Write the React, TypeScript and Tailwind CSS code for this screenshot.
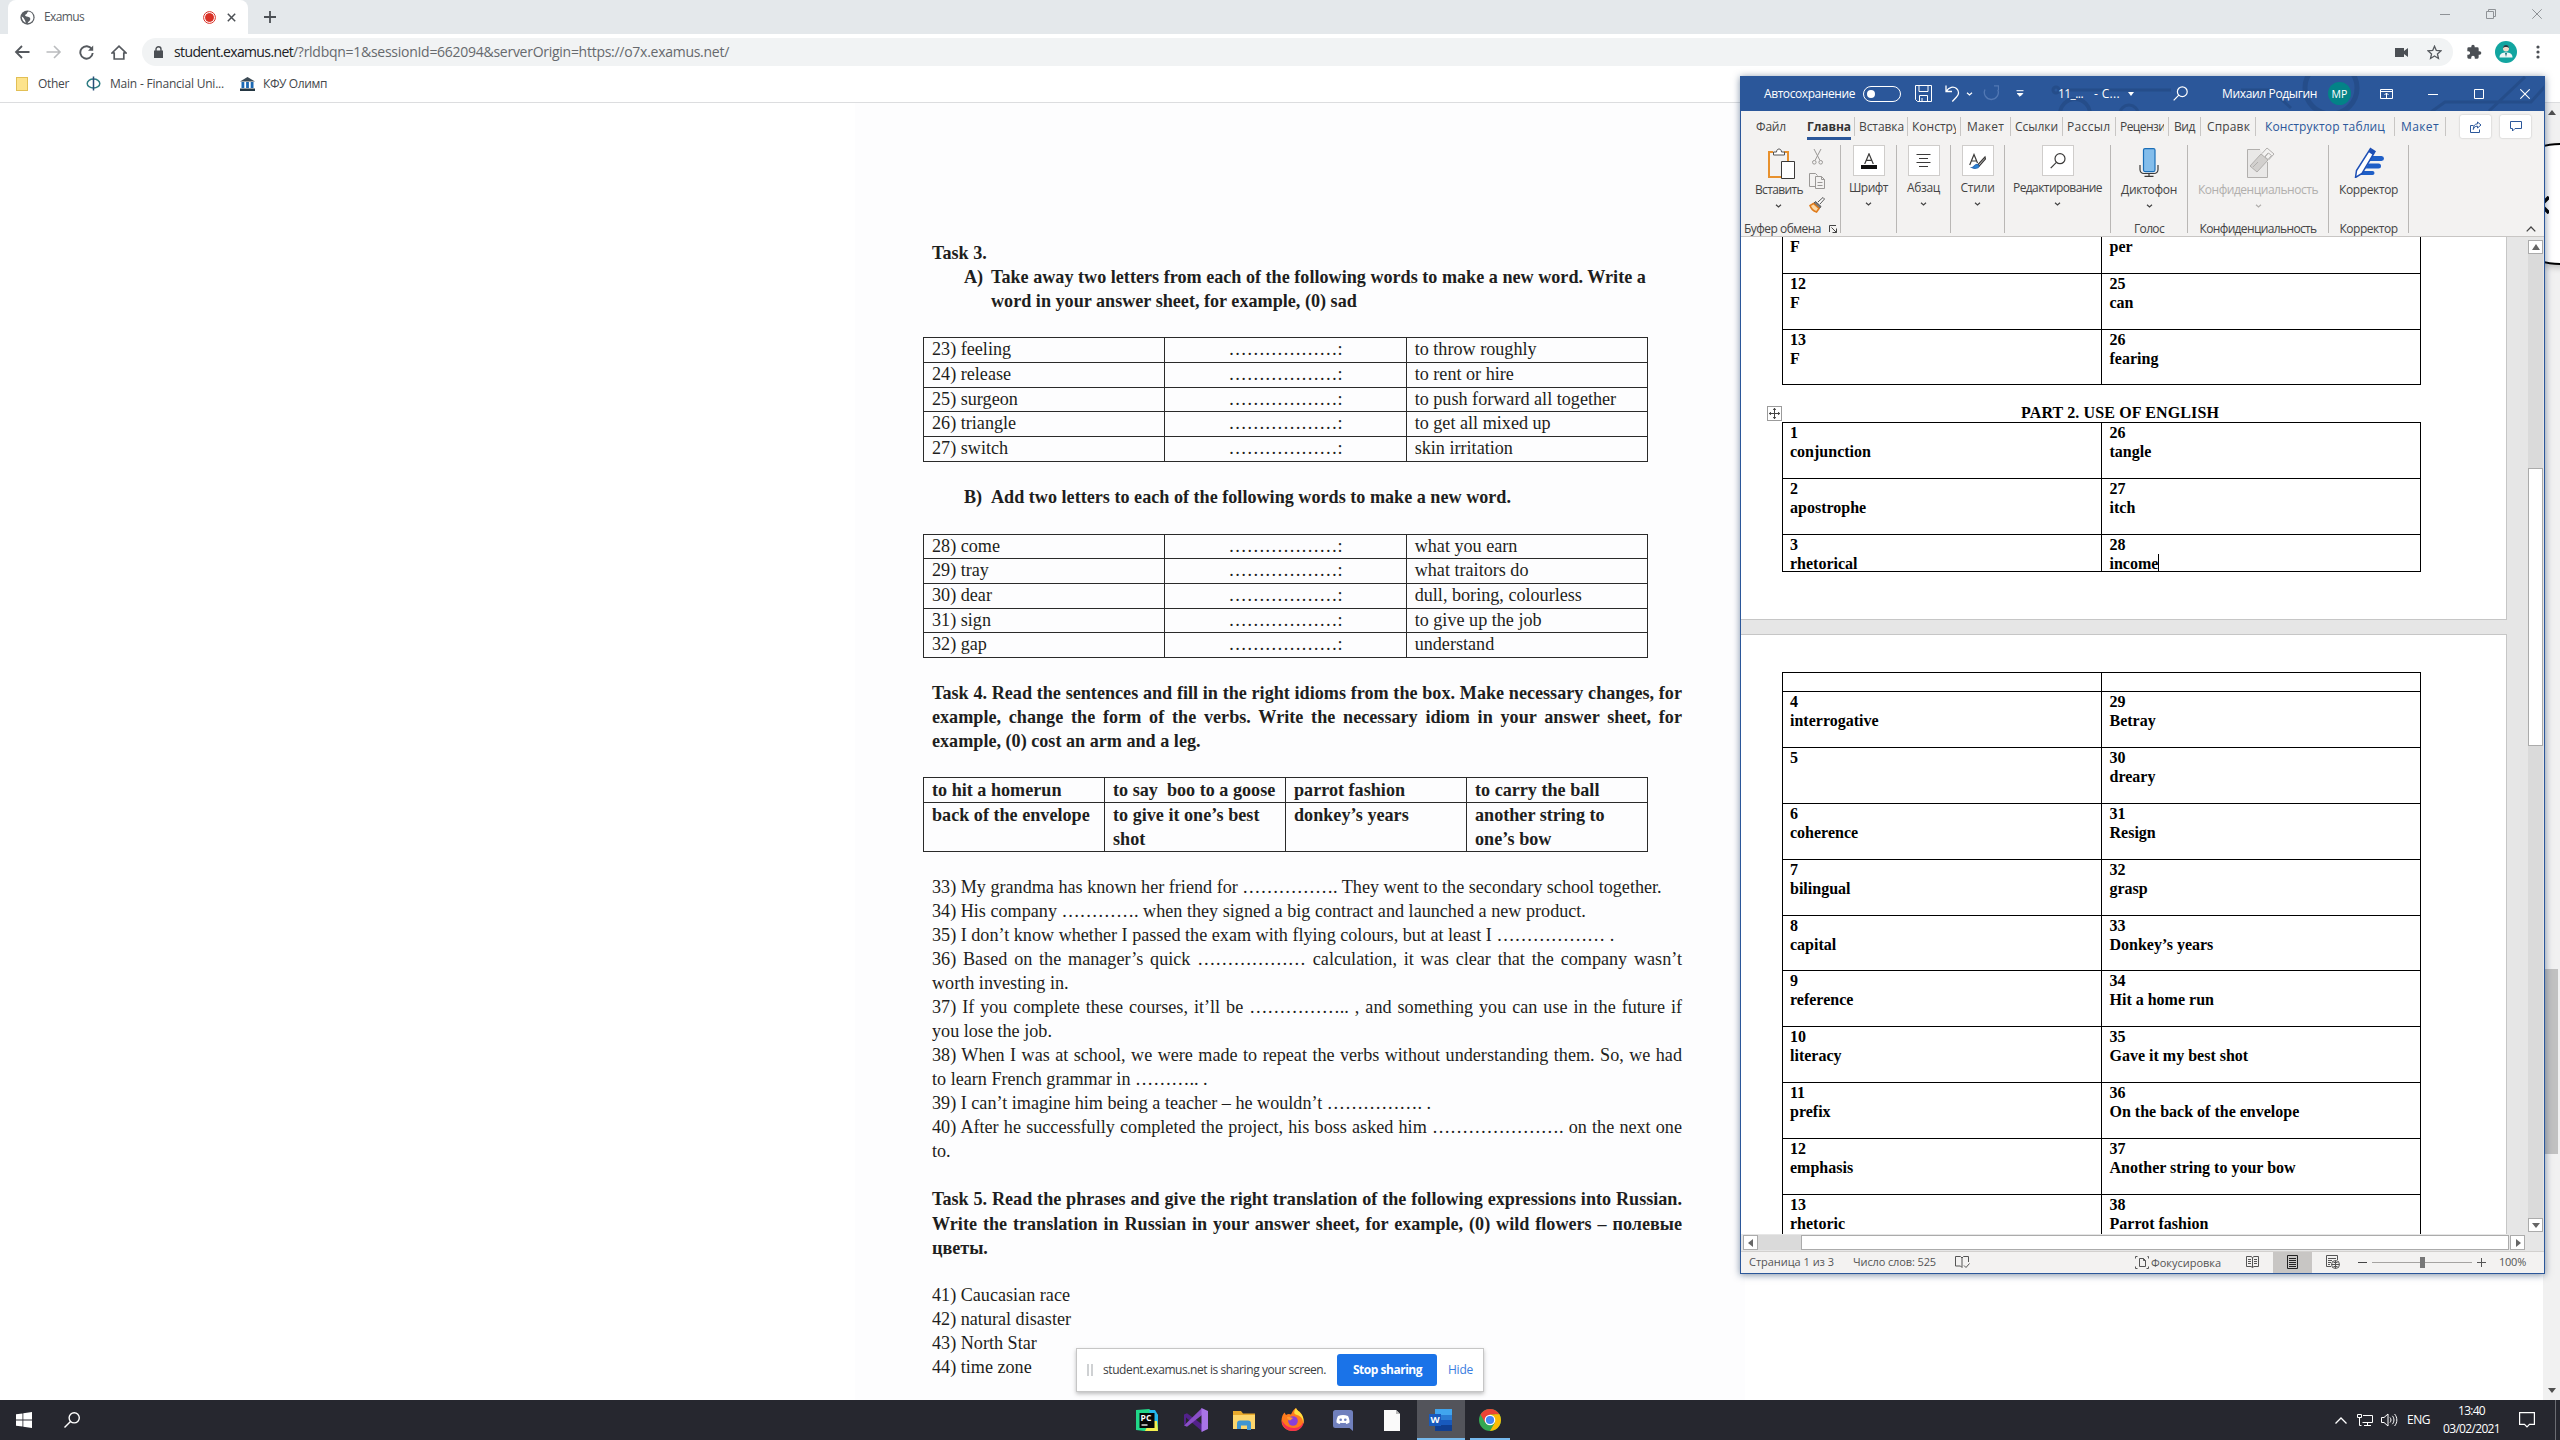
import { useLayoutEffect, useRef, type ReactNode } from 'react';

const UI = "font-['Open_Sans','Noto_Sans',sans-serif]";

/** One line of text whose tracking is adjusted to fill the width of its box. */
function Fit({ children, className = '' }: { children: string; className?: string }) {
  const box = useRef<HTMLSpanElement>(null);
  const text = useRef<HTMLSpanElement>(null);
  useLayoutEffect(() => {
    if (!box.current || !text.current) return;
    text.current.style.letterSpacing = '0px';
    const target = box.current.getBoundingClientRect().width;
    const natural = text.current.getBoundingClientRect().width;
    text.current.style.letterSpacing = `${(target - natural) / children.length}px`;
  }, [children]);
  return (
    <span ref={box} className={`block shrink-0 whitespace-pre ${className}`}>
      <span ref={text} className="inline-block whitespace-pre">{children}</span>
    </span>
  );
}

function Svg({ className, box, children, stroke = 'currentColor', sw = 1 }: { className: string; box: string; children: ReactNode; stroke?: string; sw?: number }) {
  return (
    <svg className={`block shrink-0 ${className}`} viewBox={box} fill="none" stroke={stroke} strokeWidth={sw}>
      {children}
    </svg>
  );
}

function Chevron({ className = '' }: { className?: string }) {
  return (
    <Svg className={`h-[4px] w-[7px] ${className}`} box="0 0 7 4" sw={1.2}>
      <path d="M1 .7 3.5 3 6 .7" />
    </Svg>
  );
}

/* ---------- Browser ---------- */

function TabStrip() {
  return (
    <div className="flex h-[34px] items-end bg-[#e4e8eb] pl-2">
      <div className="flex h-[34px] w-[240px] items-center rounded-t-lg bg-white pl-[12px]">
        <Svg className="h-[15px] w-[15px]" box="0 0 16 16" stroke="none">
          <circle cx="8" cy="8" r="7.6" fill="#5a5e63" />
          <path d="M9 1.5c-2 1-1 2.500-2.500 3S5 6.500 7 7s4 .5 4 2.500-2 2.500-3 4.500c3.500 0 6.300-2.700 6.300-6S12.500 1.800 9 1.500zM1.800 7c0 3.500 2.500 6 4.200 6.800C6 11 5 10.500 4.500 9.500S3 7.500 1.800 7z" fill="#fff" />
        </Svg>
        <Fit className="ml-[9px] w-[40px] text-[12px] leading-4 text-[#55595e]">Examus</Fit>
        <Svg className="ml-[119px] h-[13px] w-[13px]" box="0 0 13 13" stroke="#d93025">
          <circle cx="6.500" cy="6.500" r="5.900" />
          <circle cx="6.500" cy="6.500" r="4" fill="#d93025" />
        </Svg>
        <Svg className="ml-[11px] h-[9px] w-[9px]" box="0 0 9 9" stroke="#4b4f54" sw={1.5}>
          <path d="M.8.8l7.400 7.400M8.200.8.8 8.200" />
        </Svg>
      </div>
      <div className="flex h-[34px] flex-1 items-center pl-[16px]">
        <Svg className="h-[12px] w-[12px]" box="0 0 12 12" stroke="#4b4f54" sw={1.8}>
          <path d="M6 0v12M0 6h12" />
        </Svg>
        <div className="ml-auto flex items-center gap-[36px] pr-[18px] pb-[6px] text-[#8e9296]">
          <Svg className="h-[10px] w-[10px]" box="0 0 10 10"><path d="M0 5.500h10" /></Svg>
          <Svg className="h-[10px] w-[10px]" box="0 0 10 10"><path d="M.5 2.500h7v7h-7zM2.500 2.500v-2h7v7h-2" /></Svg>
          <Svg className="h-[10px] w-[10px]" box="0 0 10 10"><path d="M.3.3l9.400 9.400M9.700.3.3 9.700" /></Svg>
        </div>
      </div>
    </div>
  );
}

function Toolbar() {
  return (
    <div className="flex h-[34px] items-center pt-[2px] pl-[14px] text-[#55595e]">
      <Svg className="h-[14px] w-[16px]" box="0 0 16 14" sw={1.8}><path d="M15.500 7H1.500M8 1 2 7l6 6" /></Svg>
      <Svg className="ml-[16px] h-[14px] w-[16px] text-[#babcbe]" box="0 0 16 14" sw={1.6}><path d="M.5 7h14M8 1l6 6-6 6" /></Svg>
      <Svg className="ml-[17px] h-[15px] w-[15px]" box="0 0 15 15" sw={1.9}>
        <path d="M12.800 4.200A6.200 6.200 0 1 0 13.700 8" /><path d="M14.200.5v5.300H9z" fill="currentColor" stroke="none" />
      </Svg>
      <Svg className="ml-[17px] h-[15px] w-[16px]" box="0 0 16 15" sw={1.7}><path d="M1 8 8 1.200 15 8h-2.200v6H3.200V8z" /></Svg>
      <div className="ml-[15px] flex h-[28px] w-[2311px] items-center rounded-full bg-[#f1f3f4] pl-[12px]">
        <Svg className="h-[12px] w-[9px]" box="0 0 9 12" stroke="none">
          <path d="M0 4.500h9V12H0z" fill="#4b4f54" /><path d="M2 5V3.200a2.500 2.500 0 0 1 5 0V5" stroke="#4b4f54" strokeWidth="1.400" />
        </Svg>
        <Fit className="ml-[11px] w-[119px] text-[14px] leading-5 text-[#202124]">student.examus.net</Fit>
        <Fit className="w-[436px] text-[14px] leading-5 text-[#66696d]">/?rldbqn=1&sessionId=662094&serverOrigin=https://o7x.examus.net/</Fit>
        <Svg className="ml-auto h-[9px] w-[13px]" box="0 0 13 9" stroke="none"><path d="M0 0h9v3l4-3v9L9 6v3H0z" fill="#4b4f54" /></Svg>
        <Svg className="mr-[11px] ml-[19px] h-[15px] w-[15px]" box="0 0 24 24" sw={2.1}>
          <path d="m12 2 2.900 6.800 7.300.6-5.500 4.900 1.600 7.200L12 17.700l-6.300 3.800 1.600-7.200L1.800 9.400l7.300-.6z" />
        </Svg>
      </div>
      <Svg className="ml-[13px] h-[16px] w-[16px]" box="0 0 24 24" stroke="none">
        <path fill="#4b4f54" d="M20.500 11H19V7a2 2 0 0 0-2-2h-4V3.500a2.500 2.500 0 0 0-5 0V5H4a2 2 0 0 0-2 2v3.800h1.500a2.700 2.700 0 0 1 0 5.400H2V20a2 2 0 0 0 2 2h3.800v-1.500a2.700 2.700 0 0 1 5.400 0V22H17a2 2 0 0 0 2-2v-4h1.500a2.500 2.500 0 0 0 0-5z" />
      </Svg>
      <Svg className="ml-[13px] h-[22px] w-[22px]" box="0 0 22 22" stroke="none">
        <circle cx="11" cy="11" r="11" fill="#12a5a0" />
        <circle cx="11" cy="7.500" r="3" fill="#f3d9c8" /><path d="M8 7c0-4 6-4 6 0-1-1.500-5-1.500-6 0z" fill="#243a45" />
        <path d="M4.500 16.500c0-4 3-5 6.500-5s6.500 1 6.500 5z" fill="#eef6f6" /><path d="m10 12 1 4 1-4z" fill="#1b6f78" />
      </Svg>
      <Svg className="ml-[19px] h-[14px] w-[4px]" box="0 0 4 14" stroke="none">
        <g fill="#4b4f54"><circle cx="2" cy="2" r="1.600" /><circle cx="2" cy="7" r="1.600" /><circle cx="2" cy="12" r="1.600" /></g>
      </Svg>
    </div>
  );
}

function Bookmarks() {
  return (
    <div className="flex h-[35px] items-center border-b border-[#dcdddf] pb-[3px] pl-[16px] text-[12px] leading-4 text-[#44474b]">
      <div className="h-[14px] w-[12px] border border-[#e2bf55] bg-[#fde38c]" />
      <Fit className="ml-[10px] w-[31px]">Other</Fit>
      <Svg className="ml-[17px] h-[15px] w-[15px]" box="0 0 15 15" stroke="#2f7d84" sw={1.500}>
        <ellipse cx="7.500" cy="7.500" rx="6.300" ry="4.500" /><path d="M7.500.5v14" stroke="#2a4d77" />
      </Svg>
      <Fit className="ml-[9px] w-[114px]">Main - Financial Uni...</Fit>
      <Svg className="ml-[16px] h-[14px] w-[15px]" box="0 0 15 14" stroke="none">
        <path d="M7.500 0 15 4.500H0z" fill="#3c4a55" /><path d="M1.500 5h2.800v6H1.500zM6.100 5h2.800v6H6.100zM10.700 5h2.800v6h-2.800z" fill="#1c69b4" /><path d="M0 11.500h15V14H0z" fill="#243642" />
      </Svg>
      <Fit className="ml-[8px] w-[64px]">КФУ Олимп</Fit>
    </div>
  );
}

const DOTS = '………………:';
const removeLetters = [
  ['23) feeling', 'to throw roughly'],
  ['24) release', 'to rent or hire'],
  ['25) surgeon', 'to push forward all together'],
  ['26) triangle', 'to get all mixed up'],
  ['27) switch', 'skin irritation'],
];
const addLetters = [
  ['28) come', 'what you earn'],
  ['29) tray', 'what traitors do'],
  ['30) dear', 'dull, boring, colourless'],
  ['31) sign', 'to give up the job'],
  ['32) gap', 'understand'],
];
const sentences: [string, boolean][] = [
  ['33) My grandma has known her friend for ……………. They went to the secondary school together.', false],
  ['34) His company …………. when they signed a big contract and launched a new product.', false],
  ['35) I don’t know whether I passed the exam with flying colours, but at least I ……………… .', false],
  ['36) Based on the manager’s quick ……………… calculation, it was clear that the company wasn’t', true],
  ['worth investing in.', false],
  ['37) If you complete these courses, it’ll be …………….. , and something you can use in the future if', true],
  ['you lose the job.', false],
  ['38) When I was at school, we were made to repeat the verbs without understanding them. So, we had', true],
  ['to learn French grammar in ……….. .', false],
  ['39) I can’t imagine him being a teacher – he wouldn’t ……………. .', false],
  ['40) After he successfully completed the project, his boss asked him …………………. on the next one', true],
  ['to.', false],
];

function Line({ children, justify = false }: { children: ReactNode; justify?: boolean }) {
  return <p className={justify ? '[text-align-last:justify]' : 'whitespace-nowrap'}>{children}</p>;
}

function WordTable({ rows }: { rows: string[][] }) {
  return (
    <div className="-ml-[9px] w-[725px] border-t border-l border-[#2a2a2a]">
      {rows.map(([word, hint]) => (
        <div key={word} className="grid h-[24.700px] grid-cols-3 border-b border-[#2a2a2a] leading-[23px]">
          <div className="border-r border-[#2a2a2a] pl-[8px]">{word}</div>
          <div className="border-r border-[#2a2a2a] text-center">{DOTS}</div>
          <div className="border-r border-[#2a2a2a] pl-[8px]">{hint}</div>
        </div>
      ))}
    </div>
  );
}

function Exam() {
  const idiom = 'border-r border-[#2a2a2a] pl-[8px]';
  return (
    <article className="ml-[855px] h-full w-[890px] bg-[#fdfdfe] pt-[138px] pl-[77px] font-['Liberation_Serif','Times_New_Roman',serif] text-[18.150px] leading-[24.050px] text-[#1e1e20]">
      <div className="w-[750px]">
        <div className="font-bold">
          <Line>Task 3.</Line>
          <div className="flex pl-[32px]">
            <span className="w-[27px] shrink-0">A)</span>
            <div>
              <Line>Take away two letters from each of the following words to make a new word. Write a</Line>
              <Line>word in your answer sheet, for example, (0) sad</Line>
            </div>
          </div>
        </div>
        <div className="mt-[24px]"><WordTable rows={removeLetters} /></div>
        <div className="mt-[23.500px] flex pl-[32px] font-bold">
          <span className="w-[27px] shrink-0">B)</span>
          <Line>Add two letters to each of the following words to make a new word.</Line>
        </div>
        <div className="mt-[24.500px]"><WordTable rows={addLetters} /></div>
        <div className="mt-[23px] font-bold">
          <Line justify>Task 4. Read the sentences and fill in the right idioms from the box. Make necessary changes, for</Line>
          <Line justify>example, change the form of the verbs. Write the necessary idiom in your answer sheet, for</Line>
          <Line>example, (0) cost an arm and a leg.</Line>
        </div>
        <div className="mt-[24px] -ml-[9px] w-[725px] border-t border-l border-[#2a2a2a] font-bold leading-[24.100px] whitespace-pre">
          <div className="grid h-[24.700px] grid-cols-4 border-b border-[#2a2a2a]">
            <div className={idiom}>to hit a homerun</div>
            <div className={idiom}>to say  boo to a goose</div>
            <div className={idiom}>parrot fashion</div>
            <div className={idiom}>to carry the ball</div>
          </div>
          <div className="grid h-[49px] grid-cols-4 border-b border-[#2a2a2a]">
            <div className={idiom}>back of the envelope</div>
            <div className={idiom}>{'to give it one’s best\nshot'}</div>
            <div className={idiom}>donkey’s years</div>
            <div className={idiom}>{'another string to\none’s bow'}</div>
          </div>
        </div>
        <div className="mt-[23px]">
          {sentences.map(([text, justify]) => <Line key={text} justify={justify}>{text}</Line>)}
        </div>
        <div className="mt-[24px] font-bold">
          <Line justify>Task 5. Read the phrases and give the right translation of the following expressions into Russian.</Line>
          <Line justify>Write the translation in Russian in your answer sheet, for example, (0) wild flowers – полевые</Line>
          <Line>цветы.</Line>
        </div>
        <div className="mt-[23.500px]">
          <Line>41) Caucasian race</Line>
          <Line>42) natural disaster</Line>
          <Line>43) North Star</Line>
          <Line>44) time zone</Line>
        </div>
      </div>
    </article>
  );
}

function PageScrollbar() {
  return (
    <div className="flex w-[17px] flex-col items-center bg-[#f1f1f1]">
      <Svg className="mt-[7px] h-[5px] w-[8px]" box="0 0 8 5" stroke="none"><path d="M0 5 4 0l4 5z" fill="#505050" /></Svg>
      <div className="mt-[854px] h-[185px] w-[13px] bg-[#c1c1c1]" />
      <Svg className="mt-auto mb-[7px] h-[5px] w-[8px]" box="0 0 8 5" stroke="none"><path d="M0 0l4 5 4-5z" fill="#505050" /></Svg>
    </div>
  );
}

function SharingBar() {
  return (
    <div className={`absolute top-[1348px] left-[1076px] flex h-[44px] w-[408px] items-center border border-[#c6c6c6] bg-white pl-[10px] shadow-[0_2px_4px_rgba(0,0,0,0.25)] ${UI}`}>
      <div className="h-[12px] w-[6px] border-x-2 border-[#cfd1d3]" />
      <Fit className="ml-[10px] w-[223px] text-[12px] leading-4 text-[#3c4043]">student.examus.net is sharing your screen.</Fit>
      <div className="ml-[11px] flex h-[32px] w-[100px] items-center rounded-[3px] bg-[#1a73e8] pl-[16px] text-white">
        <Fit className="w-[69px] text-[12px] leading-4 font-bold">Stop sharing</Fit>
      </div>
      <Fit className="ml-[11px] w-[25px] text-[12px] leading-4 text-[#3a7de0]">Hide</Fit>
    </div>
  );
}

/** Round call widget docked at the right screen edge. */
function CallBubble() {
  return (
    <div className="absolute top-[143px] left-[2499px] h-[122px] w-[122px] rounded-full border-2 border-black bg-white shadow-[0_3px_6px_rgba(0,0,0,0.2)]">
      <Svg className="mt-[51px] ml-[38px] h-[18px] w-[10px]" box="0 0 10 18" stroke="#000" sw={3.500}><path d="M10 1 2 9l8 8" /></Svg>
    </div>
  );
}

/* ---------- Word ---------- */

function TitleBar() {
  return (
    <div className="relative flex h-[35px] shrink-0 items-center overflow-hidden bg-[#2b579a] pl-[23px] text-[12px] leading-4 text-white">
      <svg className="absolute inset-0 h-full w-full" viewBox="0 0 803 35" fill="none" stroke="#1f4377" strokeWidth="3" opacity="0.450">
        <circle cx="590" cy="12" r="26" strokeWidth="5" />
        <circle cx="334" cy="38" r="15" strokeWidth="4" /><circle cx="388" cy="38" r="9" />
        <path d="M320 14h110M500 14h30l20 18M690 36l14-10h86l18-20M748 35l36-34" />
        <circle cx="315" cy="14" r="3" />
      </svg>
      <Fit className="relative w-[91px]">Автосохранение</Fit>
      <div className="relative ml-[8px] flex h-[16px] w-[38px] items-center rounded-full border border-white pl-[3px]">
        <div className="h-[8px] w-[8px] rounded-full bg-white" />
      </div>
      <Svg className="relative ml-[14px] h-[17px] w-[17px]" box="0 0 17 17"><path d="M.5.5h16v16H2.500l-2-2zM4 .5v6h9v-6M4.500 16.500v-6h8v6M7 16.500V13" /></Svg>
      <Svg className="relative ml-[13px] h-[17px] w-[15px]" box="0 0 15 17" sw={1.300}><path d="M1 .5v6h6M1.200 6.300C4 2 8.500 1 11.500 3.500c3 2.800 2.500 6 0 8.500l-4.200 4.500" /></Svg>
      <Chevron className="relative ml-[6px]" />
      <Svg className="relative ml-[10px] h-[17px] w-[16px] text-[#5278b4]" box="0 0 16 17" sw={1.300}><path d="M11 .8h4.500V5M14.800 4.800A7 7 0 1 1 2 4.500" /></Svg>
      <Svg className="relative ml-[17px] h-[7px] w-[8px]" box="0 0 8 7"><path d="M.5.7h7M1.200 3.500h5.600L4 6.300z" fill="currentColor" /></Svg>
      <Fit className="relative ml-[34px] w-[25px]">11_...</Fit>
      <Fit className="relative ml-[11px] w-[26px]">- C...</Fit>
      <Svg className="relative ml-[8px] h-[4px] w-[6px]" box="0 0 6 4" stroke="none"><path d="M0 0h6L3 4z" fill="#fff" /></Svg>
      <Svg className="relative ml-[39px] h-[15px] w-[15px]" box="0 0 15 15" sw={1.200}><circle cx="9.300" cy="5.700" r="4.900" /><path d="M5.800 9.200.7 14.300" /></Svg>
      <Fit className="relative ml-[34px] w-[95px]">Михаил Родыгин</Fit>
      <div className="relative ml-[11px] flex h-[23px] w-[23px] items-center justify-center rounded-full bg-[#038387]">
        <Fit className="w-[16px] text-[10.500px]">МР</Fit>
      </div>
      <Svg className="relative ml-[29px] h-[10px] w-[13px]" box="0 0 13 10"><path d="M.5.5h12v9H.5zM.5 2.500h12M6.500 9V4M4.500 6l2-2 2 2" /></Svg>
      <Svg className="relative ml-[35px] h-[10px] w-[10px]" box="0 0 10 10"><path d="M0 5.500h10" /></Svg>
      <Svg className="relative ml-[36px] h-[10px] w-[10px]" box="0 0 10 10"><path d="M.5.5h9v9h-9z" /></Svg>
      <Svg className="relative ml-[36px] h-[10px] w-[10px]" box="0 0 10 10" sw={1.100}><path d="M.3.3l9.400 9.400M9.700.3.3 9.700" /></Svg>
    </div>
  );
}

function TabSep({ className }: { className: string }) {
  return <div className={`h-[19px] w-px shrink-0 bg-[#c8c6c4] ${className}`} />;
}

function RibbonTabs() {
  return (
    <div className="flex h-[31px] shrink-0 items-center pl-[15px] text-[12px] leading-4 text-[#444]">
      <Fit className="w-[30px]">Файл</Fit>
      <div className="relative ml-[21px] w-[44px]">
        <Fit className="w-[44px] font-bold text-[#333]">Главна</Fit>
        <div className="absolute top-[18px] left-0 h-[3px] w-[44px] bg-[#2b579a]" />
      </div>
      <TabSep className="ml-[3px]" />
      <Fit className="ml-[4px] w-[45px]">Вставка</Fit>
      <TabSep className="ml-[3px]" />
      <div className="ml-[4px] w-[44px] shrink-0 overflow-hidden"><Fit className="w-[47px]">Констру</Fit></div>
      <TabSep className="ml-[4px]" />
      <Fit className="ml-[6px] w-[37px]">Макет</Fit>
      <TabSep className="ml-[6px]" />
      <Fit className="ml-[4px] w-[43px]">Ссылки</Fit>
      <TabSep className="ml-[4px]" />
      <div className="ml-[4px] w-[44px] shrink-0 overflow-hidden"><Fit className="w-[50px]">Рассылк</Fit></div>
      <TabSep className="ml-[4px]" />
      <div className="ml-[4px] w-[44px] shrink-0 overflow-hidden"><Fit className="w-[52px]">Рецензир</Fit></div>
      <TabSep className="ml-[4px]" />
      <Fit className="ml-[5px] w-[21px]">Вид</Fit>
      <TabSep className="ml-[5px]" />
      <Fit className="ml-[6px] w-[43px]">Справк</Fit>
      <TabSep className="ml-[5px]" />
      <Fit className="ml-[9px] w-[120px] text-[#2b579a]">Конструктор таблиц</Fit>
      <TabSep className="ml-[9px]" />
      <Fit className="ml-[6px] w-[38px] text-[#2b579a]">Макет</Fit>
      <TabSep className="ml-[6px]" />
      <div className="ml-[14px] flex h-[23px] w-[31px] items-center justify-center rounded-[2px] bg-white text-[#2b579a] shadow-[0_0_2px_rgba(0,0,0,0.25)]">
        <Svg className="h-[12px] w-[12px]" box="0 0 12 12"><path d="M3.500 4.500h-3v7h9v-3M7.500 1l3.500 3-3.500 3V5.200C5 5 3.800 6.500 3.300 8.500 3.300 5 4.800 2.800 7.500 2.800z" /></Svg>
      </div>
      <div className="ml-[9px] flex h-[23px] w-[31px] items-center justify-center rounded-[2px] bg-white text-[#2b579a] shadow-[0_0_2px_rgba(0,0,0,0.25)]">
        <Svg className="h-[11px] w-[12px]" box="0 0 12 11"><path d="M.5.5h11v7H5L2.500 10V7.500h-2z" /></Svg>
      </div>
    </div>
  );
}

function Group({ className, children, label }: { className: string; children: ReactNode; label?: ReactNode }) {
  return (
    <div className={`mt-[3px] flex h-[88px] shrink-0 flex-col items-center border-r border-[#b9b7b5] ${className}`}>
      {children}
      <div className="mt-auto mb-[-4px] h-[16px]">{label}</div>
    </div>
  );
}

function BoxIcon({ children }: { children: ReactNode }) {
  return <div className="flex h-[31px] w-[32px] items-center justify-center border border-[#cfcdcb] bg-white text-[#3b3a39]">{children}</div>;
}

function Ribbon() {
  return (
    <div className="flex h-[95px] shrink-0 border-b border-[#c8c6c4] text-[12px] leading-4 text-[#444]">
      <Group
        className="w-[100px]"
        label={
          <div className="flex items-center">
            <Fit className="w-[77px]">Буфер обмена</Fit>
            <Svg className="ml-[8px] h-[8px] w-[8px]" box="0 0 8 8"><path d="M.5 7V.5H7M2.500 2.500l5 5M7.500 3.500v4h-4" /></Svg>
          </div>
        }
      >
        <div className="flex w-full pl-[14px]">
          <div className="flex w-[48px] flex-col items-center">
            <Svg className="mt-[3px] ml-[4px] h-[31px] w-[29px]" box="0 0 29 31">
              <path d="M6 4H2v25h13M17 4h4v9" stroke="#e8912d" strokeWidth="2" />
              <path d="M6.500 7V4h3c0-4 5-4 5 0h3v3z" fill="#fff" stroke="#555" />
              <path d="M14.500 13.500h13v17h-13z" fill="#fff" stroke="#3b3a39" />
            </Svg>
            <Fit className="mt-[3px] w-[48px]">Вставить</Fit>
            <Chevron className="mt-[6px] mr-[1px]" />
          </div>
          <div className="ml-[5px] flex w-[18px] flex-col items-center pt-[4px]">
            <Svg className="h-[16px] w-[11px] text-[#9a9896]" box="0 0 11 16"><path d="M2 0l6 11.500M9 0 3 11.500" /><circle cx="2.300" cy="13.300" r="1.800" /><circle cx="8.700" cy="13.300" r="1.800" /></Svg>
            <Svg className="mt-[8px] h-[16px] w-[16px] text-[#9a9896]" box="0 0 16 16"><path d="M6 13.500H.5V.5h6l2 2M6.500 3.500h6l3 3v9h-9zM12.500 3.500v3h3M8.500 9.500h5M8.500 12.500h5" /></Svg>
            <Svg className="mt-[8px] h-[16px] w-[16px]" box="0 0 16 16">
              <path d="m9 5 5-4.500 1.500 1.500L11 7" stroke="#555" fill="#fff" /><path d="m6.500 4.500 5.500 5-1.500 2L5 6z" fill="#777" stroke="#555" />
              <path d="M4.500 6.500 1 8.500c1 3 3.500 5.500 6.500 6.500l2.500-3.500z" fill="#fbd9a8" stroke="#e07c1c" strokeWidth="1.600" />
            </Svg>
          </div>
        </div>
      </Group>
      <Group className="w-[56px]">
        <BoxIcon>
          <div className="flex flex-col items-center">
            <Svg className="h-[11px] w-[10px]" box="0 0 10 11" sw={1.200}><path d="M.7 11 5 .8 9.300 11M2.200 7.300h5.600" /></Svg>
            <div className="mt-[1px] h-[4px] w-[16px] bg-[#111]" />
          </div>
        </BoxIcon>
        <Fit className="mt-[4px] w-[39px]">Шрифт</Fit>
        <Chevron className="mt-[6px]" />
      </Group>
      <Group className="w-[54px]">
        <BoxIcon><Svg className="h-[14px] w-[15px]" box="0 0 15 14"><path d="M.5.5h14M3 4.500h9M.5 8.500h14M3 12.500h9" /></Svg></BoxIcon>
        <Fit className="mt-[4px] w-[33px]">Абзац</Fit>
        <Chevron className="mt-[6px]" />
      </Group>
      <Group className="w-[54px]">
        <BoxIcon>
          <Svg className="h-[16px] w-[17px]" box="0 0 17 16" sw={1.200}>
            <path d="M.7 12 5 1.500l3.500 8.500M2.200 8h5" /><path d="M16 4 9 11.500l1.200 1.500L16.500 6z" fill="#fff" /><path d="M3 14.500c2.500 0 2.500-3.500 5.500-3l1.500 1.700c-1 2.500-5 2.500-7 1.300z" fill="#2b88d8" stroke="#2b6cb8" />
          </Svg>
        </BoxIcon>
        <Fit className="mt-[4px] w-[34px]">Стили</Fit>
        <Chevron className="mt-[6px]" />
      </Group>
      <Group className="w-[106px]">
        <BoxIcon><Svg className="h-[16px] w-[16px]" box="0 0 16 16" sw={1.200}><circle cx="10" cy="5.700" r="5" /><path d="M6.400 9.400.7 15.200" /></Svg></BoxIcon>
        <Fit className="mt-[4px] w-[89px]">Редактирование</Fit>
        <Chevron className="mt-[6px]" />
      </Group>
      <Group className="w-[77px]" label={<Fit className="w-[30px]">Голос</Fit>}>
        <Svg className="mt-[3px] h-[29px] w-[20px]" box="0 0 20 29" sw={1.200}>
          <rect x="4.500" y=".6" width="11.500" height="23" rx="1.500" fill="#83bdeb" stroke="#1b6fb8" />
          <path d="M1 17v4.500c0 2 1.500 4 4 4h10c2.500 0 4-2 4-4V17M10 25.500v3M5.500 28.400h9" stroke="#3b3a39" />
        </Svg>
        <Fit className="mt-[5px] w-[56px]">Диктофон</Fit>
        <Chevron className="mt-[6px]" />
      </Group>
      <Group className="w-[141px]" label={<Fit className="w-[117px]">Конфиденциальность</Fit>}>
        <Svg className="mt-[2px] ml-[5px] h-[31px] w-[28px] text-[#b1afad]" box="0 0 28 31">
          <path d="M13 2.500H.5v28h20V15" fill="#e9e8e7" /><path d="m3 19 11-12 7 6-11 12z" fill="#d2d0ce" /><path d="M15 6.500 20 1l7 6-5.500 6M18 9.500l3-3.500M6 20l5-5" /><path d="m18 10 3.500-4 3 2.500-3.500 4z" fill="#f3f2f1" />
        </Svg>
        <Fit className="mt-[4px] w-[120px] text-[#b1afad]">Конфиденциальность</Fit>
        <Chevron className="mt-[6px] text-[#b1afad]" />
      </Group>
      <Group className="w-[80px]" label={<Fit className="w-[58px]">Корректор</Fit>}>
        <Svg className="mt-[2px] h-[31px] w-[30px]" box="0 0 30 31" stroke="none">
          <path d="M18 9h9.500a2 2 0 0 1 0 5H15.500zM14.500 16.500h10a2 2 0 0 1 0 5H11.500zM10 24h8.500a2 2 0 0 1 0 4H4z" fill="#1f5fc7" />
          <path d="M16.500 1.500 21 4.500 8 26.500 1.500 30.500 2.500 23.500z" fill="#fff" stroke="#1d4fb5" strokeWidth="1.500" /><path d="M16.500 1.500 21 4.500l-2 3.400-4.500-3z" fill="#1d4fb5" />
        </Svg>
        <Fit className="mt-[4px] w-[59px]">Корректор</Fit>
      </Group>
      <Svg className="mt-auto mr-[8px] mb-[4px] ml-auto h-[6px] w-[10px]" box="0 0 10 6" sw={1.300}><path d="M.7 5.400 5 1l4.300 4.400" /></Svg>
    </div>
  );
}

type Row = [string, string, string, string];
const part1: Row[] = [['12', 'F', '25', 'can'], ['13', 'F', '26', 'fearing']];
const part2: Row[] = [['1', 'conjunction', '26', 'tangle'], ['2', 'apostrophe', '27', 'itch']];
const part2Next: Row[] = [
  ['4', 'interrogative', '29', 'Betray'],
  ['5', '', '30', 'dreary'],
  ['6', 'coherence', '31', 'Resign'],
  ['7', 'bilingual', '32', 'grasp'],
  ['8', 'capital', '33', 'Donkey’s years'],
  ['9', 'reference', '34', 'Hit a home run'],
  ['10', 'literacy', '35', 'Gave it my best shot'],
  ['11', 'prefix', '36', 'On the back of the envelope'],
  ['12', 'emphasis', '37', 'Another string to your bow'],
  ['13', 'rhetoric', '38', 'Parrot fashion'],
];

function AnswerRow({ row, className = 'h-[56px]', caret = false }: { row: Row; className?: string; caret?: boolean }) {
  return (
    <div className={`grid shrink-0 grid-cols-2 grid-rows-1 border-t border-black ${className}`}>
      <div className="border-x border-black pl-[7px]"><p>{row[0]}</p><p>{row[1]}</p></div>
      <div className="border-r border-black pl-[8px]">
        <p>{row[2]}</p>
        <p className="flex">{row[3]}{caret && <span className="h-[17px] w-px bg-black" />}</p>
      </div>
    </div>
  );
}

function WordPages() {
  return (
    <div className="flex h-[997px] w-[766px] flex-col overflow-hidden font-['Liberation_Serif','Times_New_Roman',serif] text-[16px] leading-[19.400px] font-bold text-black">
      <div className="h-[383px] shrink-0 border-r border-b border-[#c6c6c6] bg-white pl-[41px]">
        <div className="w-[639px]">
          <div className="grid h-[36px] grid-cols-2">
            <div className="border-x border-black pl-[7px]">F</div>
            <div className="border-r border-black pl-[8px]">per</div>
          </div>
          {part1.map((row, i) => <AnswerRow key={row[0]} row={row} className={i === 1 ? 'h-[55px]' : 'h-[56px]'} />)}
          <div className="border-t border-black" />
          <div className="relative mt-[18px] flex h-[19px] justify-center pl-[37px]">
            <div className="absolute top-[3px] -left-[15px] flex h-[15px] w-[15px] items-center justify-center border border-[#9b9b9b] bg-white">
              <Svg className="h-[11px] w-[11px]" box="0 0 11 11" stroke="#444"><path d="M5.500 0v11M0 5.500h11M4 1.800 5.500.5 7 1.800M4 9.200l1.500 1.300L7 9.200M1.800 4 .5 5.500 1.800 7M9.200 4l1.300 1.500L9.200 7" /></Svg>
            </div>
            <Fit className="w-[198px]">PART 2. USE OF ENGLISH</Fit>
          </div>
          {part2.map((row) => <AnswerRow key={row[0]} row={row} />)}
          <AnswerRow row={['3', 'rhetorical', '28', 'income']} className="h-[38px] border-b" caret />
        </div>
      </div>
      <div className="mt-[14px] flex-1 overflow-hidden border-t border-r border-[#c6c6c6] bg-white pt-[37px] pl-[41px]">
        <div className="w-[639px]">
          <AnswerRow row={['', '', '', '']} className="h-[19px]" />
          {part2Next.map((row) => <AnswerRow key={row[0]} row={row} className={row[0] === '8' ? 'h-[55px]' : 'h-[56px]'} />)}
        </div>
      </div>
    </div>
  );
}

function ScrollButton({ d, className }: { d: string; className: string }) {
  return (
    <div className={`flex shrink-0 items-center justify-center border border-[#ababab] bg-white ${className}`}>
      <Svg className="h-[8px] w-[8px]" box="0 0 8 8" stroke="none"><path d={d} fill="#666" /></Svg>
    </div>
  );
}

function StatusBar() {
  return (
    <div className="flex h-[22px] shrink-0 items-center border-t border-[#d2d0ce] bg-[#f3f2f1] pb-px pl-[8px] text-[11px] leading-4 text-[#555]">
      <Fit className="w-[85px]">Страница 1 из 3</Fit>
      <Fit className="ml-[19px] w-[83px]">Число слов: 525</Fit>
      <Svg className="ml-[19px] h-[12px] w-[15px]" box="0 0 15 12"><path d="M7 11.500 5.500 10H.5V.5h5L7 2l1.500-1.500h5V6M7 2v9.500M9 9.500l2 2 3.500-4" /></Svg>
      <Svg className="ml-[165px] h-[13px] w-[14px]" box="0 0 14 13"><path d="M2.500.5h-2v2M.5 10.500v2h2M11.500 12.500h2v-2M13.500 2.500v-2h-1M4.500 2.500h4l2 2v6h-6zM8.500 2.500v2h2" /></Svg>
      <Fit className="ml-[2px] w-[70px] pt-[1px]">Фокусировка</Fit>
      <Svg className="ml-[25px] h-[12px] w-[13px]" box="0 0 13 12"><path d="M6.500 11.500v-10L5 .5H.5v10H5l1.500 1 1.500-1h4.500V.5H8l-1.500 1M2 3.500h3M2 5.500h3M2 7.500h3M8 3.500h3M8 5.500h3M8 7.500h3" /></Svg>
      <div className="ml-[14px] flex h-[21px] w-[39px] items-center justify-center bg-[#c8c6c4] text-[#222]">
        <Svg className="h-[14px] w-[11px]" box="0 0 11 14"><path d="M.5.5h10v13H.5zM2 3.500h7M2 5.500h7M2 7.500h7M2 9.500h7M2 11.500h7" /></Svg>
      </div>
      <Svg className="ml-[14px] h-[14px] w-[14px]" box="0 0 14 14"><path d="M5 11.500H.5V.5h11V5M2 3.500h8M2 5.500h4M2 7.500h3M2 9.500h2" /><circle cx="9.500" cy="9.500" r="4" /><path d="M5.500 9.500h8M9.500 5.500v8M7.500 7.500h4M7.500 11.500h4" /></Svg>
      <div className="ml-[18px] h-px w-[9px] bg-[#444]" />
      <div className="ml-[5px] flex h-[11px] w-[100px] items-center">
        <div className="h-px w-[48px] bg-[#a5a3a1]" />
        <div className="h-[11px] w-[5px] bg-[#777]" />
        <div className="h-px flex-1 bg-[#a5a3a1]" />
      </div>
      <Svg className="ml-[5px] h-[9px] w-[9px]" box="0 0 9 9"><path d="M0 4.500h9M4.500 0v9" /></Svg>
      <Fit className="ml-[13px] w-[27px]">100%</Fit>
    </div>
  );
}

function WordWindow() {
  return (
    <div className={`absolute top-[76px] left-[1740px] flex h-[1198px] w-[805px] flex-col border border-t-0 border-[#2b579a] bg-[#f3f2f1] shadow-[0_1px_7px_rgba(20,50,90,0.550)] ${UI}`}>
      <TitleBar />
      <RibbonTabs />
      <Ribbon />
      <div className="flex h-[997px] shrink-0 bg-[#e6e6e6]">
        <WordPages />
        <div className="ml-auto mr-px flex w-[15px] flex-col bg-[#dadada]">
          <div className="h-[3px] bg-[#e6e6e6]" />
          <ScrollButton className="h-[14px]" d="M0 7 4 1l4 6z" />
          <div className="mt-[214px] h-[278px] border border-[#ababab] bg-white" />
          <ScrollButton className="mt-auto h-[14px]" d="M0 2l4 5 4-5z" />
          <div className="h-[2px] bg-[#e6e6e6]" />
        </div>
      </div>
      <div className="flex h-[17px] shrink-0 items-center bg-[#e6e6e6] pl-[2px]">
        <ScrollButton className="h-[15px] w-[15px]" d="M6 0 1 4l5 4z" />
        <div className="h-[15px] w-[43px] bg-[#dadada]" />
        <div className="h-[15px] w-[708px] border border-[#ababab] bg-white" />
        <ScrollButton className="ml-px h-[15px] w-[15px]" d="M2 0l5 4-5 4z" />
      </div>
      <StatusBar />
    </div>
  );
}

/* ---------- Taskbar ---------- */

function Taskbar() {
  return (
    <div className="flex h-[40px] shrink-0 items-center bg-[#26272f] pl-[16px] text-white">
      <Svg className="h-[16px] w-[16px]" box="0 0 16 16" stroke="none"><path fill="#fff" d="M0 2.300 6.500 1.400v6.200H0zM7.300 1.300 16 0v7.600H7.300zM0 8.400h6.500v6.200L0 13.700zM7.300 8.400H16V16l-8.700-1.300z" /></Svg>
      <Svg className="ml-[32px] h-[16px] w-[16px]" box="0 0 16 16" sw={1.400}><circle cx="10.200" cy="5.800" r="5.100" /><path d="M6.500 9.500.5 15.500" /></Svg>

      <Svg className="ml-[1056px] h-[22px] w-[22px]" box="0 0 22 22" stroke="none">
        <path d="M0 1 13 0l9 6v16H8L0 21z" fill="#21d789" /><path d="M13 1h6l3 5v9l-6-3z" fill="#24b8ee" /><path d="M14 12h7l1 10H9z" fill="#f5ee4f" />
        <path d="M3.500 4h15v15h-15z" fill="#070707" />
        <path d="M5.500 16h6" stroke="#fff" strokeWidth="1.300" />
        <text x="4.600" y="12" fontFamily="Open Sans" fontWeight="700" fontSize="8.500" fill="#fff">PC</text>
      </Svg>
      <Svg className="ml-[26px] h-[24px] w-[24px]" box="0 0 24 24" stroke="none">
        <path d="M0 6.500 3 5.300 19 17V24L2 9.500v6L0 17z" fill="#52218a" /><path d="M0 17.500 18 0v7L3 18.700z" fill="#8a4fc8" /><path d="m17.500 0 6.500 3v18l-6.500 3z" fill="#a974e8" />
      </Svg>
      <Svg className="ml-[25px] h-[20px] w-[22px]" box="0 0 22 20" stroke="none">
        <path d="M0 1h8l2 2.500h12V19H0z" fill="#e8a92c" /><path d="M0 5h22v14H0z" fill="#fdd66c" /><path d="M4 19v-5.500c0-2 1-3 3-3h8c2 0 3 1 3 3V20h-4v-4.500H8V19z" fill="#3f96d2" />
      </Svg>
      <Svg className="ml-[26px] h-[24px] w-[24px]" box="0 0 24 24" stroke="none">
        <path d="M15 0c1 3 4 3 6 7 4 8-1 16-9 16C5 23 .5 18.500.5 13c0-4 1.500-7 3-8.500L5 7c2-1.500 4-1 5-.5C11 4.500 12 2 15 0z" fill="#ff7a1c" />
        <path d="M.7 12C1 20 7 23 12 23c7 0 11-5 11-11-1 5-5 8-10 8S3 17 .7 12z" fill="#f5304f" /><path d="M15 0c1 3 4 3 6 7 2 3.500 2 7 1 9 .5-5-2-8-6-9s-3-4-1-7z" fill="#ffdf3d" />
        <circle cx="12" cy="13" r="4.800" fill="#8a3fd8" /><path d="M6 9c3-1 4 1 6.500 1-2 .5-2 2-3.500 2.500C7.500 12 6 11 6 9z" fill="#ff9a2c" />
      </Svg>
      <Svg className="ml-[28px] h-[21px] w-[20px]" box="0 0 20 21" stroke="none">
        <path d="M2.500 0h15A2.500 2.500 0 0 1 20 2.500V21l-3.500-3h-14A2.500 2.500 0 0 1 0 15.500v-13A2.500 2.500 0 0 1 2.500 0z" fill="#7080bd" />
        <path d="M5 6c3.500-1.500 6.500-1.500 10 0 1 2 1.700 4.200 1.500 6.500-1 .8-2 1.200-3.200 1.500l-.8-1.200c-1.700.4-3.300.4-5 0L6.700 14c-1.200-.3-2.200-.7-3.200-1.500C3.300 10.200 4 8 5 6z" fill="#fff" /><circle cx="7.700" cy="9.800" r="1.300" fill="#7080bd" /><circle cx="12.300" cy="9.800" r="1.300" fill="#7080bd" />
      </Svg>
      <Svg className="ml-[31px] h-[21px] w-[16px]" box="0 0 16 21" stroke="none"><path d="M0 0h12l4 4v17H0z" fill="#fafafa" /><path d="M12 0v4h4z" fill="#b9b9b9" /></Svg>
      <div className="ml-[17px] flex h-[40px] w-[48px] items-center justify-center border-b-2 border-[#76b9ed] bg-[#53545b]">
        <Svg className="mt-[2px] h-[22px] w-[24px]" box="0 0 24 22" stroke="none">
          <path d="M6 0h17v6H6z" fill="#41a5ee" /><path d="M6 6h17v5H6z" fill="#2b7cd3" /><path d="M6 11h17v5H6z" fill="#185abd" /><path d="M6 16h17v6H6z" fill="#103f91" />
          <path d="M0 5h12v12H0z" fill="#185abd" /><text x="1.400" y="14.300" fontFamily="Open Sans" fontWeight="700" fontSize="9.500" fill="#fff">W</text>
        </Svg>
      </div>
      <div className="ml-[5px] flex h-[40px] w-[40px] items-center justify-center border-b-2 border-[#76b9ed]">
        <Svg className="mt-[2px] h-[22px] w-[22px]" box="0 0 22 22" stroke="none">
          <circle cx="11" cy="11" r="11" fill="#34a853" /><path d="M1.500 5.500A11 11 0 0 1 20.500 5.500H11L6.200 13.700z" fill="#ea4335" /><path d="M20.500 5.500A11 11 0 0 1 11 22l4.800-8.200V5.500z" fill="#fbbc05" />
          <path d="M11 5.500h9.500l-4.700 8.200z" fill="#fbbc05" /><circle cx="11" cy="11" r="5.300" fill="#fff" /><circle cx="11" cy="11" r="4.100" fill="#4285f4" />
        </Svg>
      </div>

      <div className={`ml-auto flex h-full items-center text-[12px] leading-[18px] ${UI}`}>
        <Svg className="h-[7px] w-[12px]" box="0 0 12 7" sw={1.300}><path d="M.5 6.500 6 1l5.500 5.500" /></Svg>
        <Svg className="ml-[10px] h-[14px] w-[16px]" box="0 0 16 14"><path d="M.5 1.500h4v3h-4zM2.500 4.500v8h2M6 2.500h9.500v7h-10M10.500 9.500v3M7 12.500h7" /></Svg>
        <Svg className="ml-[8px] h-[14px] w-[17px]" box="0 0 17 14"><path d="M.5 4.500H3l4-3.500v12L3 9.500H.5zM9 4.500c1.300 1.500 1.300 3.500 0 5M11.300 2.800c2.200 2.500 2.200 5.900 0 8.400M13.600 1c3 3.500 3 8.500 0 12" /></Svg>
        <Fit className="ml-[9px] w-[23px]">ENG</Fit>
        <div className="ml-[13px] flex w-[57px] flex-col items-center">
          <Fit className="w-[27px]">13:40</Fit>
          <Fit className="w-[57px]">03/02/2021</Fit>
        </div>
        <Svg className="ml-[19px] h-[16px] w-[16px]" box="0 0 16 16" sw={1.200}><path d="M.6.6h14.800v11.800h-4.900L8 15l-2.500-2.600H.6z" /></Svg>
        <div className="ml-[20px] mr-[4px] h-full w-px bg-[#6b6c72]" />
      </div>
    </div>
  );
}

export default function App() {
  return (
    <div className="relative flex h-[1440px] w-[2560px] flex-col overflow-hidden bg-white">
      <header className={UI}>
        <TabStrip />
        <Toolbar />
        <Bookmarks />
      </header>
      <main className="flex min-h-0 flex-1 justify-between">
        <Exam />
        <PageScrollbar />
      </main>
      <Taskbar />
      <CallBubble />
      <WordWindow />
      <SharingBar />
    </div>
  );
}
